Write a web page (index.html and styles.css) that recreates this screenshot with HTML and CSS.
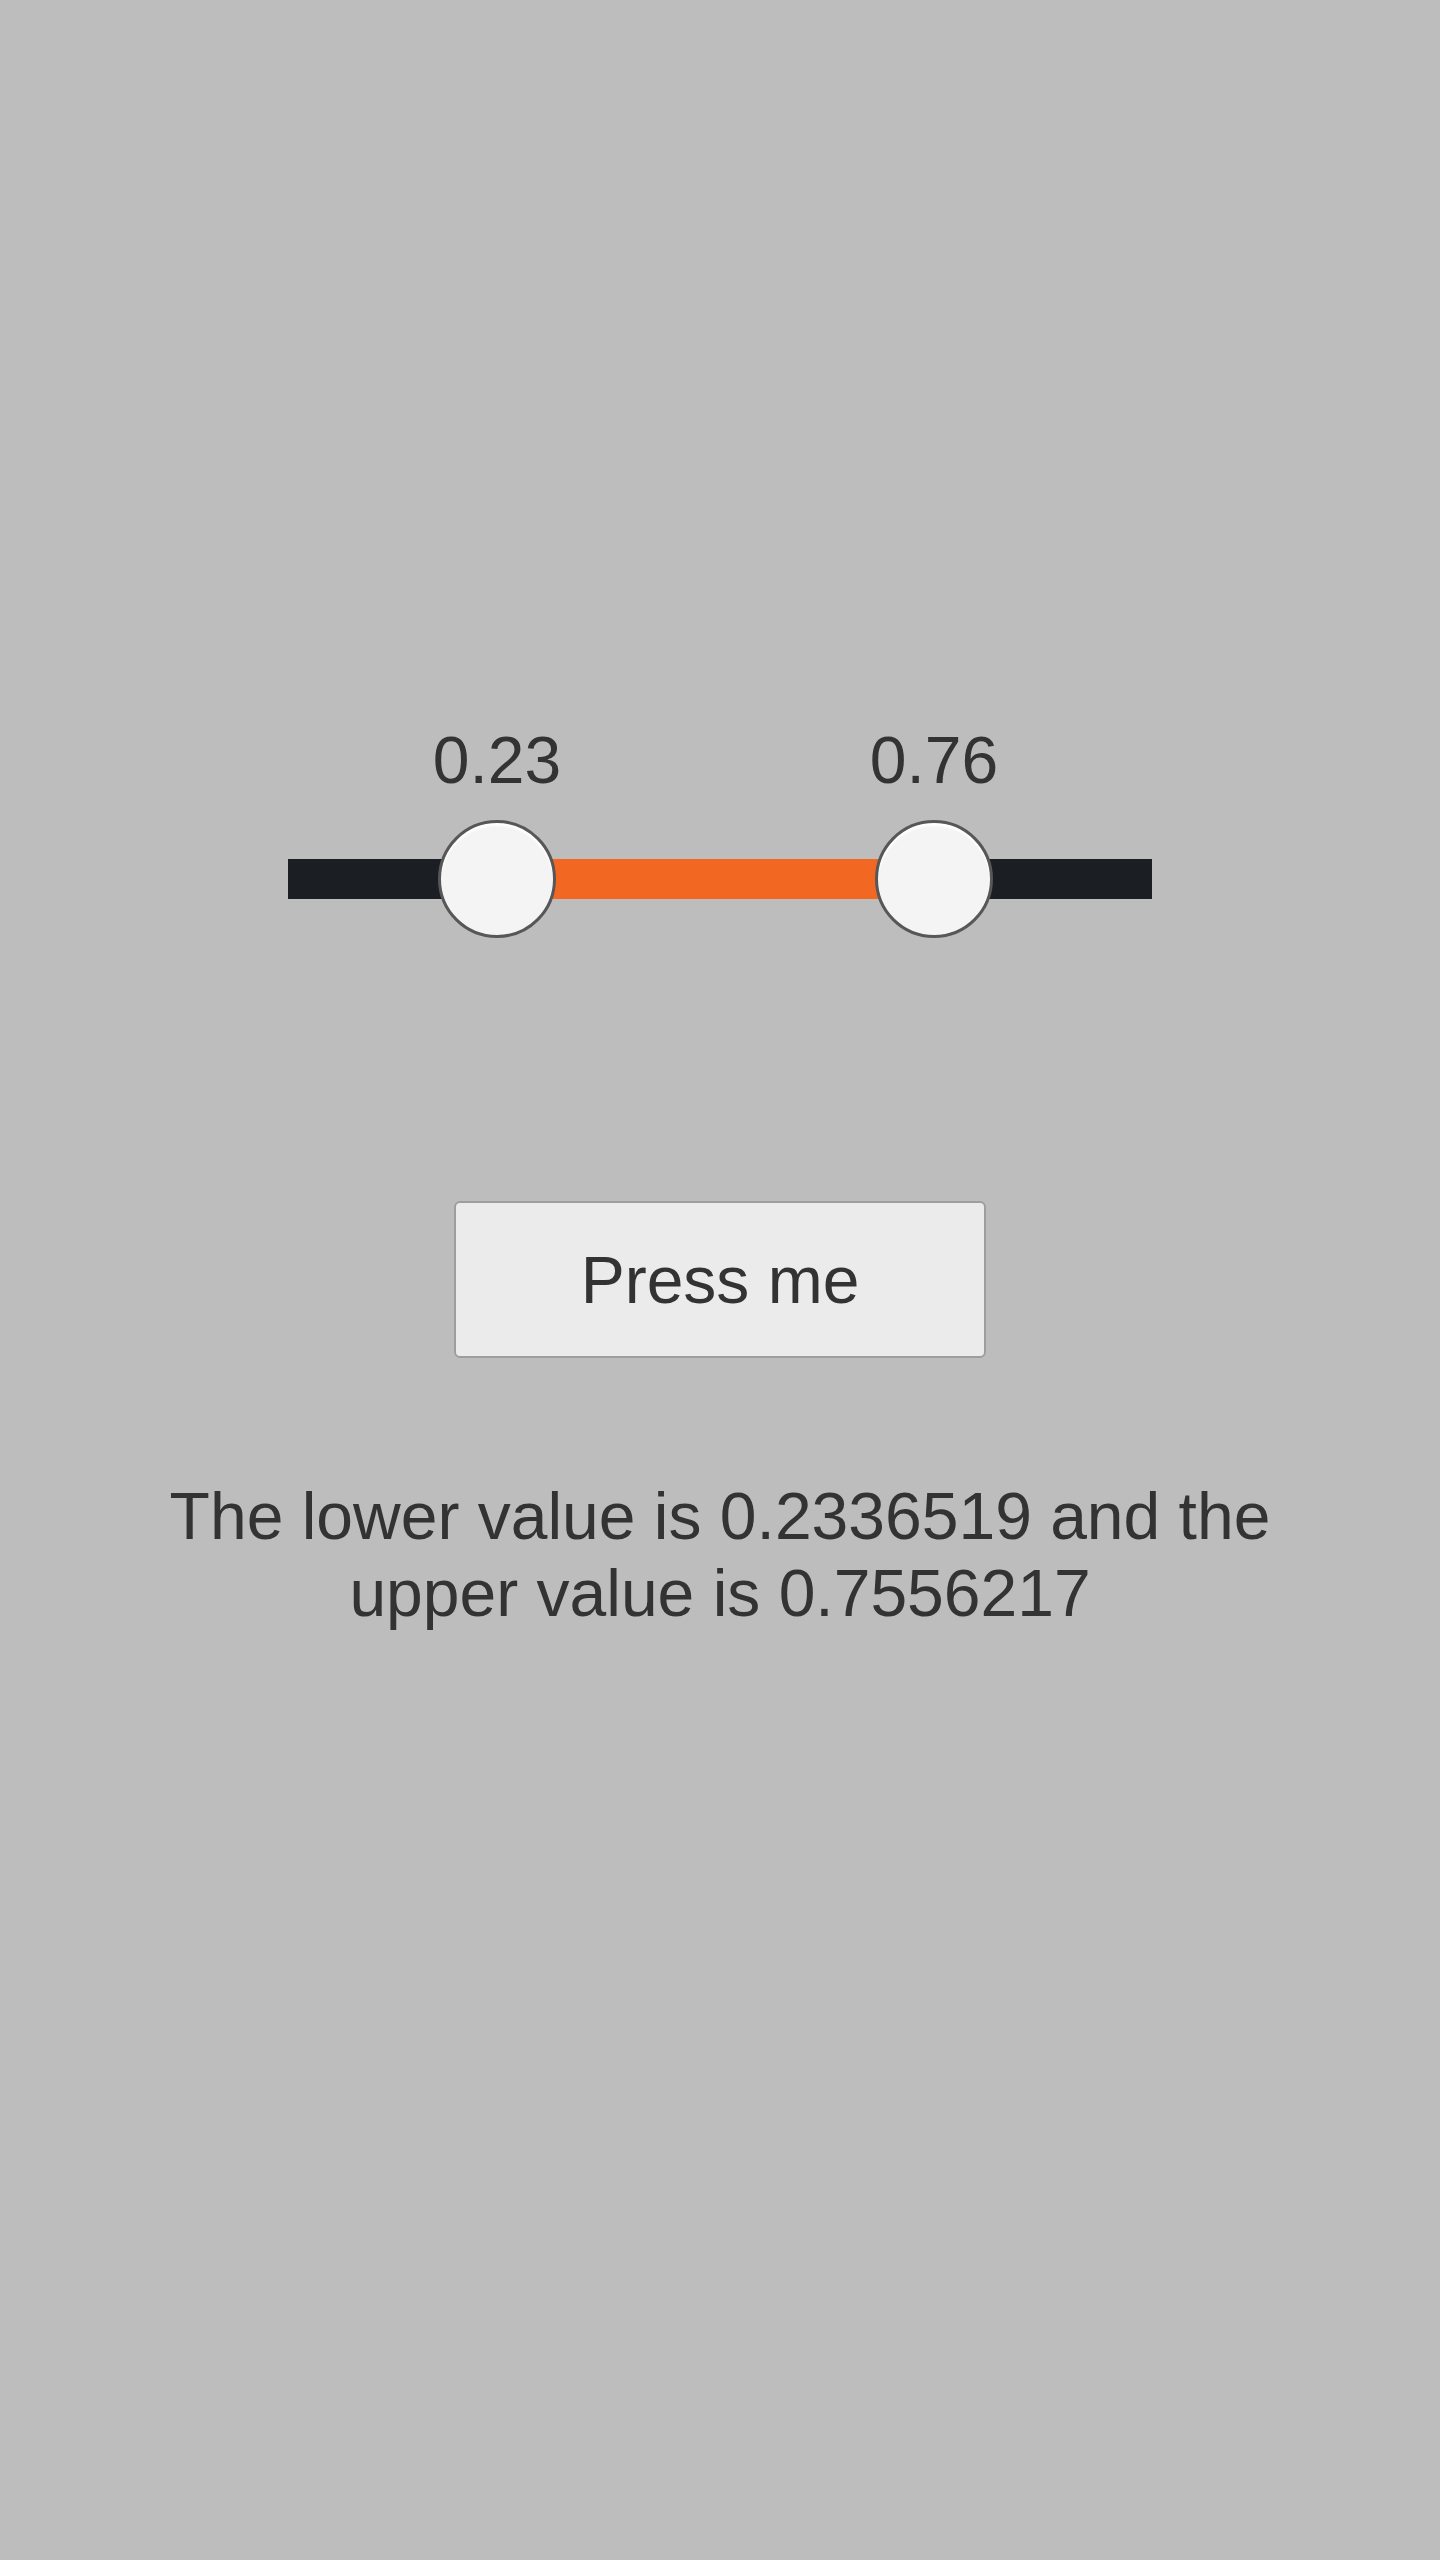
FILE: index.html
```html
<!DOCTYPE html>
<html>
<head>
<meta charset="utf-8">
<link rel="stylesheet" href="styles.css">
</head>
<body>
<main class="page">
  <div class="slider">
    <div class="labels">
      <span class="label" style="left: 24.19%">0.23</span>
      <span class="label" style="left: 74.77%">0.76</span>
    </div>
    <div class="rail">
      <div class="track">
        <div class="range" style="left: 24.19%; width: 50.58%"></div>
      </div>
      <div class="thumb" style="left: 24.19%"></div>
      <div class="thumb" style="left: 74.77%"></div>
    </div>
  </div>
  <button class="btn">Press me</button>
  <p class="msg">The lower value is 0.2336519 and the upper value is 0.7556217</p>
</main>
</body>
</html>
```
FILE: styles.css
```css
html, body {
  margin: 0;
  padding: 0;
  background: #bdbdbd;
}
body {
  font-family: "Liberation Sans", Arial, sans-serif;
  color: #333333;
  min-height: 2560px;
}
.page {
  display: flex;
  flex-direction: column;
  align-items: center;
  padding-top: 728px;
}
.slider {
  width: 864px;
}
.labels {
  position: relative;
  height: 64px;
}
.label {
  position: absolute;
  top: 0;
  transform: translateX(-50%);
  font-size: 66px;
  line-height: 64px;
  color: #333333;
  white-space: nowrap;
}
.rail {
  position: relative;
  margin-top: 28px;
  height: 118px;
  display: flex;
  align-items: center;
}
.track {
  position: relative;
  width: 100%;
  height: 40px;
  background: #1b1f23;
}
.range {
  position: absolute;
  top: 0;
  bottom: 0;
  background: #f26722;
}
.thumb {
  position: absolute;
  top: 0;
  width: 112px;
  height: 112px;
  margin-left: -59px;
  border-radius: 50%;
  background: #f4f4f4;
  border: 3px solid #575757;
  box-shadow: inset 0 3px 2px rgba(255,255,255,0.95);
}
.btn {
  margin-top: 263px;
  width: 532px;
  height: 157px;
  background: #ebebeb;
  border: 2px solid #9e9e9e;
  border-radius: 6px;
  font-family: "Liberation Sans", Arial, sans-serif;
  font-size: 66px;
  color: #333333;
  padding: 0;
  display: flex;
  align-items: center;
  justify-content: center;
}
.msg {
  margin: 120px 0 0;
  width: 1200px;
  text-align: center;
  font-size: 66px;
  line-height: 77px;
  color: #333333;
}
```
